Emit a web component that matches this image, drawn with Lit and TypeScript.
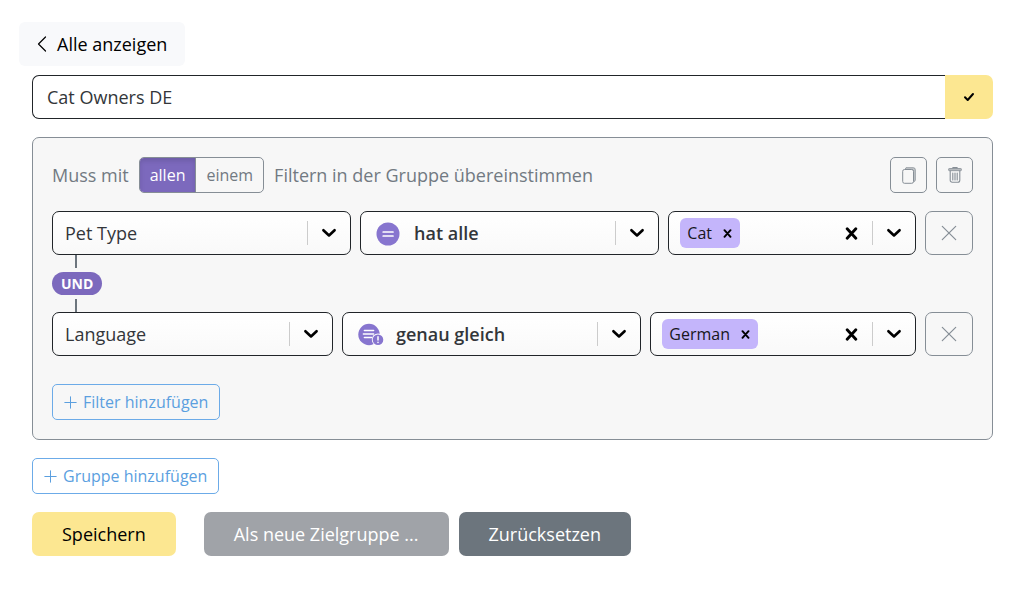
import { LitElement, html, css, svg, nothing } from "lit";
import { customElement, property, state } from "lit/decorators.js";

type Operator = "all" | "exact";

interface FilterRow {
  field: string;
  operator: Operator;
  values: string[];
}

const FIELDS = ["Pet Type", "Language"];
const OPERATORS: Record<Operator, string> = {
  all: "hat alle",
  exact: "genau gleich",
};

const chevronIcon = html`<svg class="icon" width="16" height="12" viewBox="0 0 16 12" aria-hidden="true">
  <path d="M2.400 3.200 8 8.500l5.600-5.300" fill="none" stroke="#000" stroke-width="2.600" stroke-linecap="round" stroke-linejoin="round" />
</svg>`;

const crossIcon = (size: number) => html`<svg class="icon" width=${size} height=${size} viewBox="0 0 12 12" aria-hidden="true">
  <path d="M2 1.600 10 10.400M10 1.600 2 10.400" fill="none" stroke="#000" stroke-width="2.600" stroke-linecap="round" />
</svg>`;

const thinCrossIcon = html`<svg class="icon" width="16" height="16" viewBox="0 0 16 16" aria-hidden="true">
  <path d="M1.300 1.300 14.700 14.700M14.700 1.300 1.300 14.700" fill="none" stroke="currentColor" stroke-width="1.200" stroke-linecap="round" />
</svg>`;

const plusIcon = html`<svg class="icon" width="13" height="13" viewBox="0 0 13 13" aria-hidden="true">
  <path d="M6.500.8v11.400M.8 6.500h11.400" fill="none" stroke="currentColor" stroke-width="1" stroke-linecap="round" />
</svg>`;

const operatorIcons = {
  all: svg`<circle cx="12" cy="12" r="11.500" fill="#8775cf" />
    <path d="M7.200 10h9.800M7.200 14h9.800" fill="none" stroke="#fff" stroke-width="1.700" stroke-linecap="round" />`,
  exact: svg`<circle cx="11" cy="11.500" r="10.700" fill="#8775cf" />
    <path d="M6.400 7.500h9.200M5.400 11h10.200M6.400 14.500h7.200" fill="none" stroke="#fff" stroke-width="1.500" stroke-linecap="round" />
    <circle cx="20" cy="16.700" r="6.200" fill="#fcfcfc" />
    <circle cx="20" cy="16.700" r="5.300" fill="#8775cf" />
    <path d="M20 13.700v3.200M20 19.300v.3" fill="none" stroke="#fff" stroke-width="1.500" stroke-linecap="round" />`,
};

const shared = css`
  :host {
    display: block;
    box-sizing: border-box;
    font-family: "Open Sans", "Noto Sans", sans-serif;
    font-size: 18px;
    line-height: 28px;
    color: #33363a;
  }
  *,
  *::before,
  *::after {
    box-sizing: border-box;
  }
  button,
  input,
  select {
    margin: 0;
    padding: 0;
    border: 0;
    background: none;
    font: inherit;
    color: inherit;
    outline: none;
  }
  button {
    cursor: pointer;
  }
  button:focus-visible,
  select:focus-visible {
    box-shadow: 0 0 0 3px rgba(124, 105, 189, 0.4);
  }
  .icon {
    display: block;
    flex: none;
  }
`;

@customElement("filter-row")
export class FilterRowElement extends LitElement {
  @property({ attribute: false }) row!: FilterRow;

  static styles = [
    shared,
    css`
      .row {
        display: flex;
        gap: 9px;
      }
      .control {
        display: grid;
        grid-template-columns: 1fr;
        align-items: center;
        height: 44px;
        border: 1px solid #212529;
        border-radius: 7px;
        background: linear-gradient(#fff, #f9f9f9);
      }
      .field {
        flex: 1 1 221px;
        min-width: 0;
      }
      .operator {
        flex: 0 0 32.5%;
        font-weight: 600;
      }
      .values {
        display: flex;
        flex: 1 1 auto;
        padding-left: 11px;
      }
      .control > select {
        grid-area: 1 / 1;
        width: 100%;
        height: 42px;
        padding: 0 56px 0 12px;
        border-radius: 6px;
        appearance: none;
      }
      .operator > select {
        padding-left: 53px;
      }
      .operator-icon {
        grid-area: 1 / 1;
        display: block;
        margin: 2px 0 0 15px;
        pointer-events: none;
      }
      .indicators {
        grid-area: 1 / 1;
        justify-self: end;
        pointer-events: none;
      }
      .indicators,
      .value-actions {
        display: flex;
        align-items: center;
      }
      .slot {
        display: flex;
        align-items: center;
        justify-content: center;
        width: 42px;
        height: 42px;
      }
      .divider {
        width: 1px;
        height: 24px;
        background: #ccc;
      }
      .tag {
        display: flex;
        align-items: center;
        gap: 11px;
        height: 30px;
        padding: 0 8px 0 7px;
        border-radius: 6px;
        background: #c4b5fb;
        font-size: 16px;
        color: #17171c;
      }
      .search {
        flex: 1 1 12px;
        width: 12px;
        min-width: 0;
      }
      .remove {
        display: flex;
        flex: none;
        align-items: center;
        justify-content: center;
        width: 48px;
        height: 44px;
        border: 1px solid #868e96;
        border-radius: 7px;
        color: #868e96;
      }
    `,
  ];

  render() {
    const { field, operator, values } = this.row;
    return html`
      <div class="row">
        <div class="control field">
          <select aria-label="Feld">
            ${FIELDS.map((f) => html`<option ?selected=${f === field}>${f}</option>`)}
          </select>
          <div class="indicators"><span class="divider"></span><span class="slot">${chevronIcon}</span></div>
        </div>
        <div class="control operator">
          <select aria-label="Operator">
            ${Object.entries(OPERATORS).map(
              ([key, label]) => html`<option value=${key} ?selected=${key === operator}>${label}</option>`
            )}
          </select>
          <svg class="operator-icon" width="26" height="24" viewBox="0 0 26 24" aria-hidden="true">
            ${operatorIcons[operator]}
          </svg>
          <div class="indicators"><span class="divider"></span><span class="slot">${chevronIcon}</span></div>
        </div>
        <div class="control values">
          ${values.map(
            (v) => html`<span class="tag">${v}<button type="button" aria-label="${v} entfernen">${crossIcon(9)}</button></span>`
          )}
          <input class="search" type="text" aria-label="Werte" />
          <div class="value-actions">
            <button class="slot" type="button" aria-label="Alle Werte entfernen">${crossIcon(13)}</button>
            <span class="divider"></span>
            <button class="slot" type="button" aria-label="Werte anzeigen">${chevronIcon}</button>
          </div>
        </div>
        <button class="remove" type="button" aria-label="Filter entfernen">${thinCrossIcon}</button>
      </div>
    `;
  }
}

@customElement("app-root")
export class AppRoot extends LitElement {
  @state() private match: "allen" | "einem" = "allen";
  @state() private rows: FilterRow[] = [
    { field: "Pet Type", operator: "all", values: ["Cat"] },
    { field: "Language", operator: "exact", values: ["German"] },
  ];

  static styles = [
    shared,
    css`
      .page {
        padding: 22px 31px 32px 32px;
      }
      .back {
        display: inline-flex;
        align-items: center;
        gap: 10px;
        height: 44px;
        margin-left: -13px;
        padding: 0 18px;
        border-radius: 6px;
        background: #f8f9fb;
        color: #000;
        text-decoration: none;
      }
      .name {
        display: flex;
        height: 44px;
        margin-top: 9px;
      }
      .name-input {
        flex: 1;
        min-width: 0;
        padding: 0 14px;
        border: 1px solid #212529;
        border-right: 0;
        border-radius: 7px 0 0 7px;
        background: #fff;
      }
      .confirm {
        display: flex;
        align-items: center;
        justify-content: center;
        width: 48px;
        border-radius: 0 7px 7px 0;
        background: #fce791;
      }
      .group {
        margin-top: 18px;
        padding: 19px;
        border: 1px solid #868e96;
        border-radius: 7px;
        background: #f7f7f7;
      }
      .group-head {
        display: flex;
        align-items: center;
        gap: 10px;
        margin-bottom: 18px;
        color: #727a82;
      }
      .toggle {
        display: flex;
        height: 36px;
        border: 1px solid #868e96;
        border-radius: 5px;
        overflow: hidden;
        font-size: 16px;
      }
      .toggle-option {
        padding: 0 10px;
      }
      .toggle-option + .toggle-option {
        border-left: 1px solid #868e96;
      }
      .toggle-option.active {
        background: #7c69bd;
        box-shadow: inset 0 3px 5px rgba(0, 0, 0, 0.12);
        color: #fff;
      }
      .tools {
        display: flex;
        gap: 9px;
        margin-left: auto;
      }
      .tool {
        display: flex;
        align-items: center;
        justify-content: center;
        width: 37px;
        height: 36px;
        border: 1px solid #868e96;
        border-radius: 5px;
        color: #868e96;
      }
      .joint {
        display: flex;
        flex-direction: column;
        align-items: flex-start;
        gap: 4px;
      }
      .line {
        width: 2px;
        height: 13px;
        margin-left: 23px;
        background: #6c757d;
      }
      .pill {
        padding: 0 9px;
        border-radius: 12px;
        background: #7c69bd;
        font-size: 14px;
        font-weight: 700;
        line-height: 23px;
        color: #fff;
      }
      .add {
        display: flex;
        align-items: center;
        gap: 6px;
        height: 36px;
        padding: 0 11px;
        border: 1px solid #6cabe8;
        border-radius: 5px;
        font-size: 16px;
        color: #5b9fdf;
      }
      .add-filter {
        margin-top: 28px;
      }
      .add-group {
        margin-top: 18px;
        background: #fff;
      }
      .actions {
        display: flex;
        flex-wrap: wrap;
        gap: 10px;
        margin-top: 18px;
      }
      .action {
        height: 44px;
        padding: 0 30px;
        border-radius: 7px;
        background: #6c757d;
        color: #fff;
      }
      .action.primary {
        margin-right: 18px;
        background: #fce791;
        color: #000;
      }
      .action:disabled {
        background: #a0a3a8;
        cursor: default;
      }
    `,
  ];

  private option(value: "allen" | "einem") {
    const active = this.match === value;
    return html`<button
      class="toggle-option ${active ? "active" : ""}"
      type="button"
      aria-pressed=${active}
      @click=${() => (this.match = value)}
    >${value}</button>`;
  }

  render() {
    return html`
      <main class="page">
        <a class="back" href="#">
          <svg class="icon" width="10" height="16" viewBox="0 0 10 16" aria-hidden="true">
            <path d="M8.500 1 1.500 8l7 7" fill="none" stroke="#000" stroke-width="1.200" stroke-linecap="round" stroke-linejoin="round" />
          </svg>
          Alle anzeigen
        </a>

        <div class="name">
          <input class="name-input" type="text" aria-label="Name der Zielgruppe" .value=${"Cat Owners DE"} />
          <button class="confirm" type="button" aria-label="Name übernehmen">
            <svg class="icon" width="12" height="10" viewBox="0 0 12 10" aria-hidden="true">
              <path d="M2 5.300 4.700 8 10 2" fill="none" stroke="#000" stroke-width="2" stroke-linecap="round" stroke-linejoin="round" />
            </svg>
          </button>
        </div>

        <section class="group">
          <div class="group-head">
            <span>Muss mit</span>
            <div class="toggle">${this.option("allen")}${this.option("einem")}</div>
            <span>Filtern in der Gruppe übereinstimmen</span>
            <div class="tools">
              <button class="tool" type="button" aria-label="Gruppe duplizieren">
                <svg class="icon" width="14" height="17" viewBox="0 0 14 17" aria-hidden="true">
                  <path d="M3 2.500 4 .7h7.300a2 2 0 0 1 2 2v10.300a2 2 0 0 1-1.800 1.800V4.500a2 2 0 0 0-2-2z" fill="#c3c7ca" stroke="currentColor" stroke-width=".8" stroke-linejoin="round" />
                  <rect x=".7" y="2.500" width="10.800" height="13.800" rx="1.800" fill="#f7f7f7" stroke="currentColor" stroke-width="1" />
                </svg>
              </button>
              <button class="tool" type="button" aria-label="Gruppe löschen">
                <svg class="icon" width="14" height="16" viewBox="0 0 14 16" aria-hidden="true">
                  <path d="M5 1.500V.6h4v.9" fill="none" stroke="currentColor" stroke-width="1.200" />
                  <rect x=".6" y="1.500" width="12.800" height="2.200" rx=".7" fill="#b5b9bd" stroke="currentColor" stroke-width=".8" />
                  <path d="M2.200 4v9.300a2 2 0 0 0 2 2h5.600a2 2 0 0 0 2-2V4M4.800 6v7M7 6v7M9.200 6v7" fill="none" stroke="currentColor" stroke-width="1.100" stroke-linecap="round" />
                </svg>
              </button>
            </div>
          </div>

          ${this.rows.map(
            (row, i) => html`
              ${i > 0
                ? html`<div class="joint"><span class="line"></span><span class="pill">UND</span><span class="line"></span></div>`
                : nothing}
              <filter-row .row=${row}></filter-row>
            `
          )}

          <button class="add add-filter" type="button">${plusIcon}Filter hinzufügen</button>
        </section>

        <button class="add add-group" type="button">${plusIcon}Gruppe hinzufügen</button>

        <div class="actions">
          <button class="action primary" type="button">Speichern</button>
          <button class="action" type="button" disabled>Als neue Zielgruppe ...</button>
          <button class="action" type="button">Zurücksetzen</button>
        </div>
      </main>
    `;
  }
}
